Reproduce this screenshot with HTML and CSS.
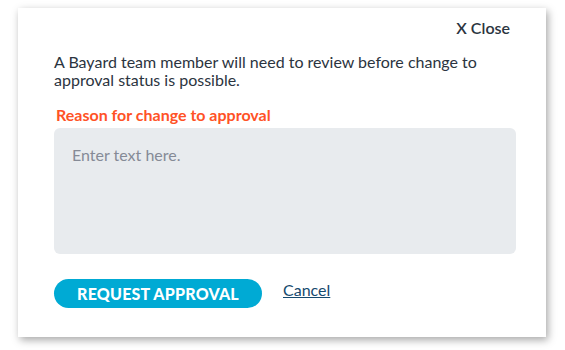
FILE: index.html
```html
<!DOCTYPE html>
<html lang="en">
<head>
  <meta charset="UTF-8">
  <meta name="viewport" content="width=device-width, initial-scale=1.0">
  <title>Request Approval</title>
  <link rel="stylesheet" href="styles.css">
</head>
<body>

  <div class="modal">
    <div class="modal-header">
      <button class="close-btn">X Close</button>
    </div>
    <p class="modal-text">A Bayard team member will need to review before change to approval status is possible.</p>
    <label class="field-label" for="reason">Reason for change to approval</label>
    <textarea class="field-input" id="reason" placeholder="Enter text here."></textarea>
    <div class="modal-actions">
      <button class="btn-primary">REQUEST APPROVAL</button>
      <a class="cancel-link" href="#">Cancel</a>
    </div>
  </div>

</body>
</html>
```

FILE: styles.css
```css
body {
  font-family: Lato, "Open Sans", sans-serif;
  margin: 0;
  padding: 8px 19px 13px 18px;
  background: #fff;
  color: #2b3440;
}
.modal {
  width: 528px;
  height: 329px;
  box-sizing: border-box;
  padding: 9px 36px 29px 36px;
  background: #fff;
  box-shadow: 2px 3px 8px rgba(0, 0, 0, 0.35);
  display: flex;
  flex-direction: column;
}
.modal-header {
  display: flex;
  justify-content: flex-end;
}
.close-btn {
  font-family: inherit;
  font-size: 16px;
  font-weight: 600;
  color: #2b3440;
  background: none;
  border: 0;
  padding: 0;
  line-height: 22px;
  cursor: pointer;
}
.modal-text {
  margin: 14px 0 0;
  font-size: 16px;
  line-height: 18px;
  color: #2b3440;
}
.field-label {
  margin-top: 17px;
  padding-left: 2px;
  font-size: 16px;
  font-weight: 700;
  line-height: 18px;
  color: #ff5226;
}
.field-input {
  flex-shrink: 0;
  margin-top: 4px;
  width: 462px;
  height: 126px;
  box-sizing: border-box;
  border: 0;
  border-radius: 6px;
  background: #e8ebee;
  padding: 17px 18px;
  font-family: inherit;
  font-size: 16px;
  color: #2b3440;
  resize: none;
}
.field-input::placeholder {
  color: #858a96;
}
.modal-actions {
  margin-top: 25px;
  display: flex;
  align-items: center;
  gap: 21px;
}
.btn-primary {
  width: 208px;
  height: 29px;
  border: 0;
  border-radius: 15px;
  background: #00aad4;
  color: #fff;
  font-family: inherit;
  font-size: 16px;
  font-weight: 900;
  letter-spacing: 0.2px;
  padding: 0;
  cursor: pointer;
}
.cancel-link {
  font-size: 16px;
  color: #16496e;
  text-decoration: underline;
  margin-top: -8px;
}
```
